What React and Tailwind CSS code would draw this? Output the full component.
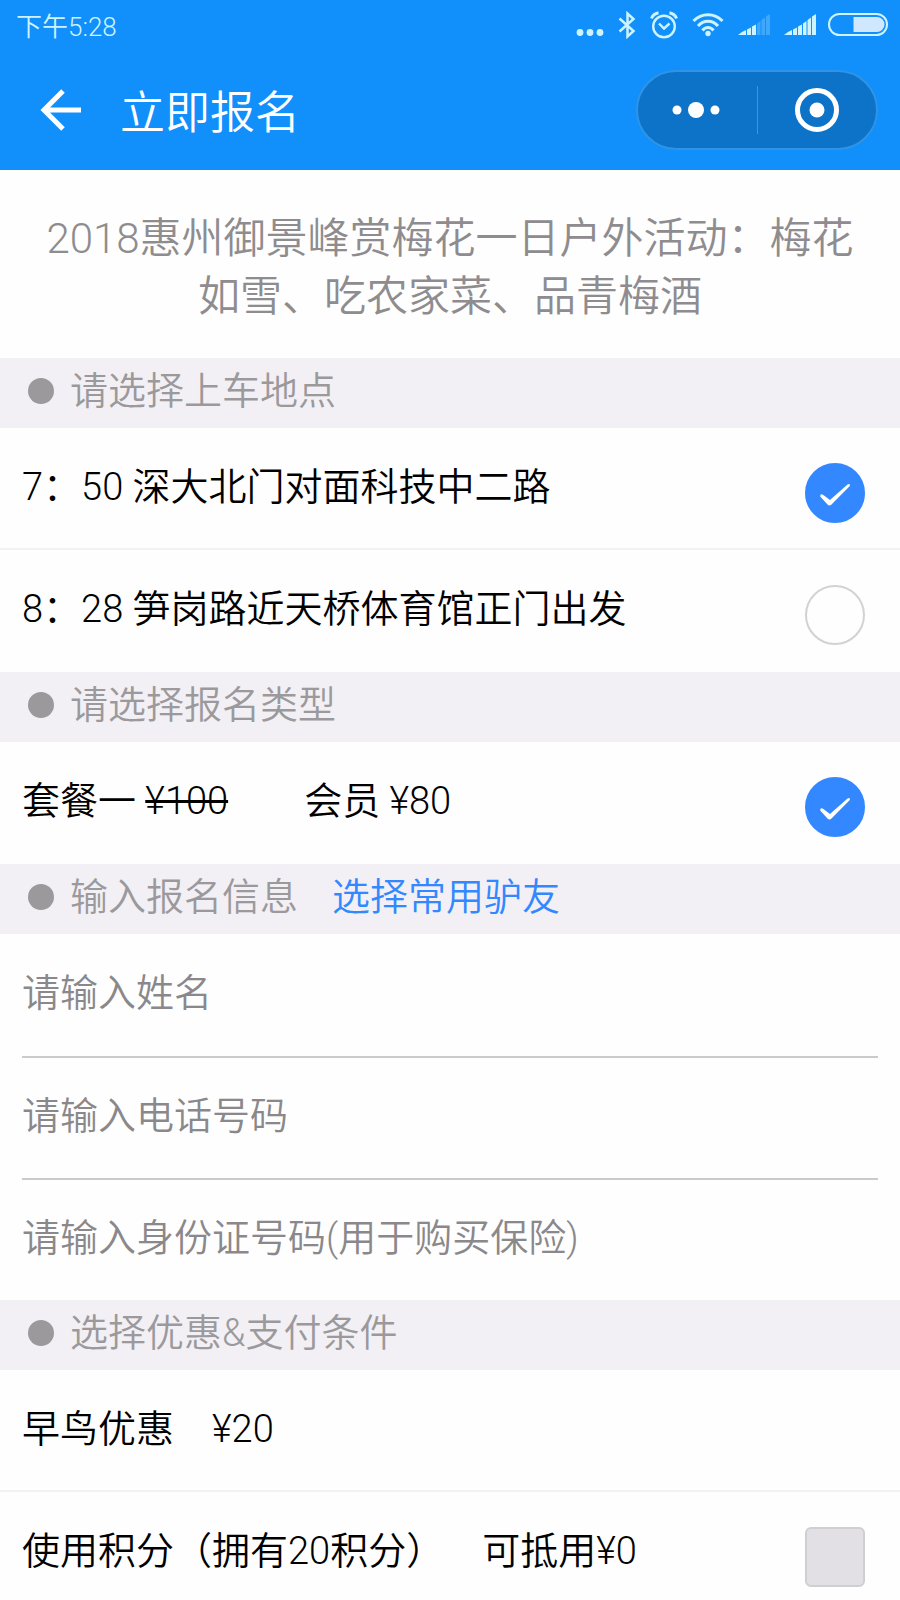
import { useState } from 'react';

function SignalBars({ strong }) {
  const dim = strong ? 1 : 0.25;

  return (
    <svg viewBox="0 0 32 24" className="h-6 w-8" fill="currentColor" aria-hidden="true">
      <path d="M0 22L4 19L8 17V22Z" />
      <path d="M9 16.500L13 14.500V22H9Z" />
      <path d="M14 13.500L18 11.500V22H14Z" />
      <path d="M19 10.500L22.500 8V22H19Z" opacity={dim} />
      <path d="M23.500 7L27 4.500V22H23.500Z" opacity={dim} />
      <path d="M28 3.500L32 1V22H28Z" opacity={dim} />
    </svg>
  );
}

function StatusBar() {
  return (
    <div className="flex h-[50px] items-center justify-between pr-3 pl-4 text-[#cdf3ff]">
      <span className="pt-1 text-[26px] leading-[32px]">下午5:28</span>
      <div className="flex items-center">
        <svg viewBox="0 0 28 28" className="mr-3.5 size-7" fill="currentColor" aria-hidden="true">
          <circle cx="4" cy="21.5" r="3.4" />
          <circle cx="14" cy="21.5" r="3.4" />
          <circle cx="24" cy="21.5" r="3.4" />
        </svg>
        <svg
          viewBox="0 0 18 28"
          className="mr-3.5 h-7 w-[18px]"
          fill="none"
          stroke="currentColor"
          strokeWidth="2.5"
          aria-hidden="true"
        >
          <path d="M1.500 7.500L15.500 20L9.500 25.500V2.500L15.500 8L1.500 20.500" />
        </svg>
        <svg
          viewBox="0 0 28 28"
          className="mr-3.5 size-7"
          fill="none"
          stroke="currentColor"
          strokeWidth="2.4"
          aria-hidden="true"
        >
          <circle cx="14" cy="15.500" r="10.800" />
          <path d="M9 12.500L14 17.500L19.500 12.500" />
          <path d="M1.500 7.500C2.500 4.500 5 2.500 8.500 1.800M26.500 7.500C25.500 4.500 23 2.500 19.500 1.800" strokeWidth="3" />
        </svg>
        <svg
          viewBox="0 0 32 28"
          className="mr-3.5 h-7 w-8"
          fill="none"
          stroke="currentColor"
          strokeWidth="3"
          aria-hidden="true"
        >
          <path d="M1.500 10C9.500 1.500 22.500 1.500 30.500 10" />
          <path d="M6 15C11.500 8.500 20.500 8.500 26 15" />
          <path d="M10.500 19.500C13.500 15.500 18.500 15.500 21.500 19.500" />
          <circle cx="16" cy="22.500" r="2.700" fill="currentColor" stroke="none" />
        </svg>
        <div className="mr-3.5">
          <SignalBars />
        </div>
        <div className="mr-3">
          <SignalBars strong />
        </div>
        <svg viewBox="0 0 60 24" className="h-6 w-[60px]" fill="none" aria-hidden="true">
          <rect x="1" y="1" width="58" height="21" rx="10.500" stroke="currentColor" strokeWidth="2" />
          <path d="M25.500 4H49A7.500 7.500 0 0 1 49 19H25.500Z" fill="#cfe8fd" />
        </svg>
      </div>
    </div>
  );
}

function NavBar() {
  return (
    <div className="flex h-[120px] items-center pr-[22px] pl-10">
      <button type="button" aria-label="返回" className="mr-[38px]">
        <svg
          viewBox="0 0 42 42"
          className="size-[42px]"
          fill="none"
          stroke="currentColor"
          strokeWidth="5"
          aria-hidden="true"
        >
          <path d="M41 21H4M23 2L4 21L23 40" />
        </svg>
      </button>
      <h1 className="flex-1 pt-2 text-[45px] leading-[60px]">立即报名</h1>
      <div className="flex h-20 w-[242px] items-center rounded-full border-2 border-[#2f93e6] bg-[#0d73c8]">
        <button type="button" aria-label="更多" className="flex flex-1 justify-center">
          <svg viewBox="0 0 50 20" className="h-5 w-[50px]" fill="currentColor" aria-hidden="true">
            <circle cx="5" cy="10" r="4.500" />
            <circle cx="24" cy="10" r="8" />
            <circle cx="43" cy="10" r="4.500" />
          </svg>
        </button>
        <span className="h-12 w-px bg-[#3f94da]" />
        <button type="button" aria-label="关闭" className="flex flex-1 justify-center">
          <svg viewBox="0 0 44 44" className="size-11" fill="none" aria-hidden="true">
            <circle cx="22" cy="22" r="19.500" stroke="currentColor" strokeWidth="5" />
            <circle cx="22" cy="22" r="7.500" fill="currentColor" />
          </svg>
        </button>
      </div>
    </div>
  );
}

function SectionHeader({ title, children }) {
  return (
    <div className="flex h-[70px] items-center bg-[#f2f0f4] pb-1 pl-7 text-[38px] leading-[48px] text-[#9b999c]">
      <span className="mr-4 size-[26px] rounded-full bg-[#9b999c]" />
      <h2>{title}</h2>
      {children}
    </div>
  );
}

function Row({ control, children }) {
  return (
    <label className="flex h-[122px] items-start justify-between border-b-2 border-[#f2f1f3] pt-[35px] pr-[35px] pl-[22px] text-[38px] leading-[48px] text-black last:border-b-0">
      <span className="whitespace-pre">{children}</span>
      {control}
    </label>
  );
}

function RoundOption({ name, checked, onChange }) {
  return (
    <span className="grid shrink-0">
      <input
        type="radio"
        name={name}
        checked={checked}
        onChange={onChange}
        className="peer col-start-1 row-start-1 size-[60px] appearance-none rounded-full border-2 border-[#d3d1d4] checked:border-[#3388ff] checked:bg-[#3388ff]"
      />
      <svg
        viewBox="0 0 60 60"
        className="pointer-events-none invisible col-start-1 row-start-1 size-[60px] text-white peer-checked:visible"
        fill="currentColor"
        aria-hidden="true"
      >
        <path d="M15.200 33.500Q15 30.500 18 31.700L25 37L42.500 21.500Q45.500 20 44.800 23L26.500 41.500Q24.500 43.500 22.500 41.500Z" />
      </svg>
    </span>
  );
}

const stops = [
  { id: 'north', label: '7：50 深大北门对面科技中二路' },
  { id: 'bridge', label: '8：28 笋岗路近天桥体育馆正门出发' }
];

const fields = [
  { key: 'name', type: 'text', placeholder: '请输入姓名' },
  { key: 'phone', type: 'tel', placeholder: '请输入电话号码' },
  { key: 'idcard', type: 'text', placeholder: '请输入身份证号码(用于购买保险)' }
];

export default function App() {
  const [stop, setStop] = useState('north');
  const [plan, setPlan] = useState('one');
  const [form, setForm] = useState({ name: '', phone: '', idcard: '' });
  const [usePoints, setUsePoints] = useState(false);

  return (
    <div
      lang="zh-CN"
      className="min-h-screen bg-[#fefefe] font-['Roboto','Noto_Sans_CJK_SC',sans-serif] font-[350] [text-spacing-trim:space-all]"
    >
      <header className="bg-[#118ffb] text-white">
        <StatusBar />
        <NavBar />
      </header>

      <main>
        <p className="px-10 pt-10 pb-8 text-center text-[42px] leading-[58px] text-[#8e8c8f]">
          2018惠州御景峰赏梅花一日户外活动：梅花如雪、吃农家菜、品青梅酒
        </p>

        <SectionHeader title="请选择上车地点" />
        <div>
          {stops.map((item) => (
            <Row
              key={item.id}
              control={<RoundOption name="stop" checked={stop === item.id} onChange={() => setStop(item.id)} />}
            >
              {item.label}
            </Row>
          ))}
        </div>

        <SectionHeader title="请选择报名类型" />
        <div>
          <Row control={<RoundOption name="plan" checked={plan === 'one'} onChange={() => setPlan('one')} />}>
            套餐一 <s>¥100</s>　　会员 ¥80
          </Row>
        </div>

        <SectionHeader title="输入报名信息">
          <a href="#friends" className="ml-[34px] text-[#3388ff]">
            选择常用驴友
          </a>
        </SectionHeader>
        <div className="px-[22px]">
          {fields.map((field) => (
            <input
              key={field.key}
              type={field.type}
              aria-label={field.placeholder}
              placeholder={field.placeholder}
              value={form[field.key]}
              onChange={(event) => setForm({ ...form, [field.key]: event.target.value })}
              className="block h-[122px] w-full border-[#cbcacc] pb-1 text-[38px] text-black outline-none placeholder:text-[#8a888b] not-first:border-t-2"
            />
          ))}
        </div>

        <SectionHeader title="选择优惠&支付条件" />
        <div>
          <Row>早鸟优惠　¥20</Row>
          <Row
            control={
              <input
                type="checkbox"
                checked={usePoints}
                onChange={(event) => setUsePoints(event.target.checked)}
                className="size-[60px] shrink-0 appearance-none rounded-md border-2 border-[#cfced1] bg-[#e2e0e4] checked:bg-[#3388ff]"
              />
            }
          >
            使用积分（拥有20积分）　可抵用¥0
          </Row>
        </div>
      </main>
    </div>
  );
}
